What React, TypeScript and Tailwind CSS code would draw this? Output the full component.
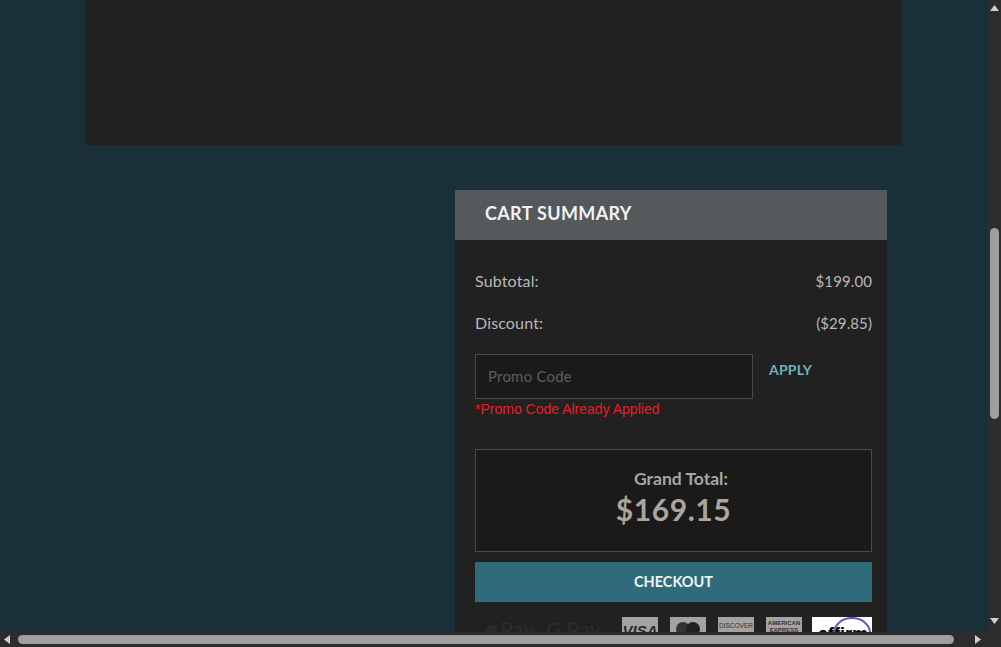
export default function App() {
  const latoFont = "font-['Lato','Noto_Sans',sans-serif]";
  return (
    <div className={`relative h-[647px] w-[1001px] overflow-hidden bg-[#1a3038] ${latoFont}`}>
      <div className="ml-[85px] h-[145px] w-[817px] bg-[#212121]" />
      <div className="ml-[455px] mt-[45px] w-[432px] bg-[#212121]">
        <div className="flex h-[50px] items-center bg-[#54595c] pb-[4px] pl-[30px] text-[18px] font-bold tracking-[0.35px] text-[#f2f2f2]">CART SUMMARY</div>
        <div className="pl-[20px] pr-[15px] pt-[29px]">
          <div className="flex h-[24px] items-center justify-between text-[16px] leading-[24px] tracking-[0.15px] text-[#b8b8b8]">
            <span>Subtotal:</span>
            <span className="text-[15px] tracking-[0.1px]">$199.00</span>
          </div>
          <div className="mt-[18px] flex h-[24px] items-center justify-between text-[16px] leading-[24px] tracking-[0.15px] text-[#b8b8b8]">
            <span>Discount:</span>
            <span className="text-[15px] tracking-[0.1px]">($29.85)</span>
          </div>
          <div className="mt-[19px] flex items-start">
            <div className="flex h-[45px] w-[278px] items-center border border-[#4a4a4a] bg-[#1a1a1a] pb-[1px] pl-[12px] text-[15px] tracking-[0.2px] text-[#5e5e5e]">Promo Code</div>
            <div className="ml-[16px] mt-[5px] text-[14px] font-bold tracking-[0.2px] text-[#6fb0bd]">APPLY</div>
          </div>
          <div className="h-[21px] font-['Liberation_Sans',sans-serif] text-[14px] leading-[21px] text-[#ed1c24]">*Promo Code Already Applied</div>
          <div className="mt-[29px] flex h-[103px] w-[397px] flex-col items-center border border-[#4a4a4a] bg-[#1a1a1a] pt-[19px] text-[#aaa69e]">
            <div className="pl-[15px] text-[17.5px] leading-[20px] font-bold">Grand Total:</div>
            <div className="text-[30px] leading-[40px] font-bold tracking-[0.6px]">$169.15</div>
          </div>
          <div className="mt-[10px] flex h-[40px] w-[397px] items-center justify-center bg-[#2f6b7a] text-[14.5px] font-bold text-[#f0f5f5]">CHECKOUT</div>
          <div className="mt-[15px] flex h-[30px] w-[397px] items-start text-[#2a2a2a]">
            <div className="ml-[10px] flex w-[137px] items-start text-[21px] leading-[24px] font-bold">
              <svg className="mt-[3px]" width="15" height="18" viewBox="0 0 15 18" fill="#2a2a2a"><path d="M10 1 C10 3 8.500 4.500 7 4.500 C7 3 8.500 1 10 1 Z M7.500 6 C9 5 11 4.500 13 6.500 C11 8 11 11 14 12.500 C13 15 11.500 17.500 10 17.500 C9 17.500 8.500 17 7.500 17 C6.500 17 6 17.500 5 17.500 C3 17.500 1 13.500 1 10 C1 6.500 5 4.500 7.500 6 Z" /></svg>
              <span>Pay</span>
              <span className="ml-[12px]">G Pay</span>
            </div>
            <div className="flex h-[30px] w-[36px] items-start justify-center bg-[#a3a3a3] pt-[6px] font-['Liberation_Sans',sans-serif] text-[15px] leading-[16px] font-bold text-[#26282d] italic">VISA</div>
            <div className="ml-[12px] flex h-[30px] w-[36px] justify-center bg-[#a3a3a3] pt-[4px]">
              <svg width="30" height="14" viewBox="0 0 30 14"><circle cx="10" cy="8" r="7" fill="#333" /><circle cx="20" cy="8" r="7" fill="#222" /></svg>
            </div>
            <div className="ml-[12px] flex h-[30px] w-[36px] justify-center bg-[#a3a3a3] pt-[4px] font-['Liberation_Sans',sans-serif] text-[6.5px] leading-[10px] text-[#333]">DISCOVER</div>
            <div className="ml-[12px] flex h-[30px] w-[36px] justify-center bg-[#a3a3a3] pt-[3px] text-center font-['Liberation_Sans',sans-serif] text-[6px] leading-[7px] font-bold text-[#333]">AMERICAN<br />EXPRESS</div>
            <div className="relative ml-[10px] h-[30px] w-[60px] overflow-hidden bg-white pl-[6px] pt-[8px] font-['Liberation_Sans',sans-serif] text-[18px] leading-[18px] font-bold text-black">
              affirm
              <svg className="absolute left-0 top-0" width="60" height="30" viewBox="0 0 60 30" fill="none"><path d="M22 16 A18 15 0 0 1 58 16" stroke="#6a4fc4" strokeWidth="2" /></svg>
            </div>
          </div>
        </div>
      </div>

      <div className="absolute right-0 top-0 flex h-[647px] w-[14px] flex-col items-center bg-[#2c2c2c]">
        <svg className="mt-[5px]" width="9" height="6" viewBox="0 0 9 6"><path d="M4.500 0 L9 6 L0 6 Z" fill="#cfcfcf" /></svg>
        <div className="mt-[217px] h-[191px] w-[9px] rounded-full bg-[#9f9f9f]" />
        <svg className="mt-[199px]" width="9" height="6" viewBox="0 0 9 6"><path d="M0 0 L9 0 L4.500 6 Z" fill="#cfcfcf" /></svg>
      </div>
      <div className="absolute bottom-0 left-0 flex h-[15px] w-[1001px] items-center bg-[#2c2c2c]">
        <svg className="ml-[4px]" width="6" height="9" viewBox="0 0 6 9"><path d="M6 0 L6 9 L0 4.500 Z" fill="#cfcfcf" /></svg>
        <div className="ml-[8px] h-[9px] w-[936px] rounded-full bg-[#9f9f9f]" />
        <svg className="ml-[21px]" width="6" height="9" viewBox="0 0 6 9"><path d="M0 0 L6 4.500 L0 9 Z" fill="#cfcfcf" /></svg>
      </div>
    </div>
  );
}
